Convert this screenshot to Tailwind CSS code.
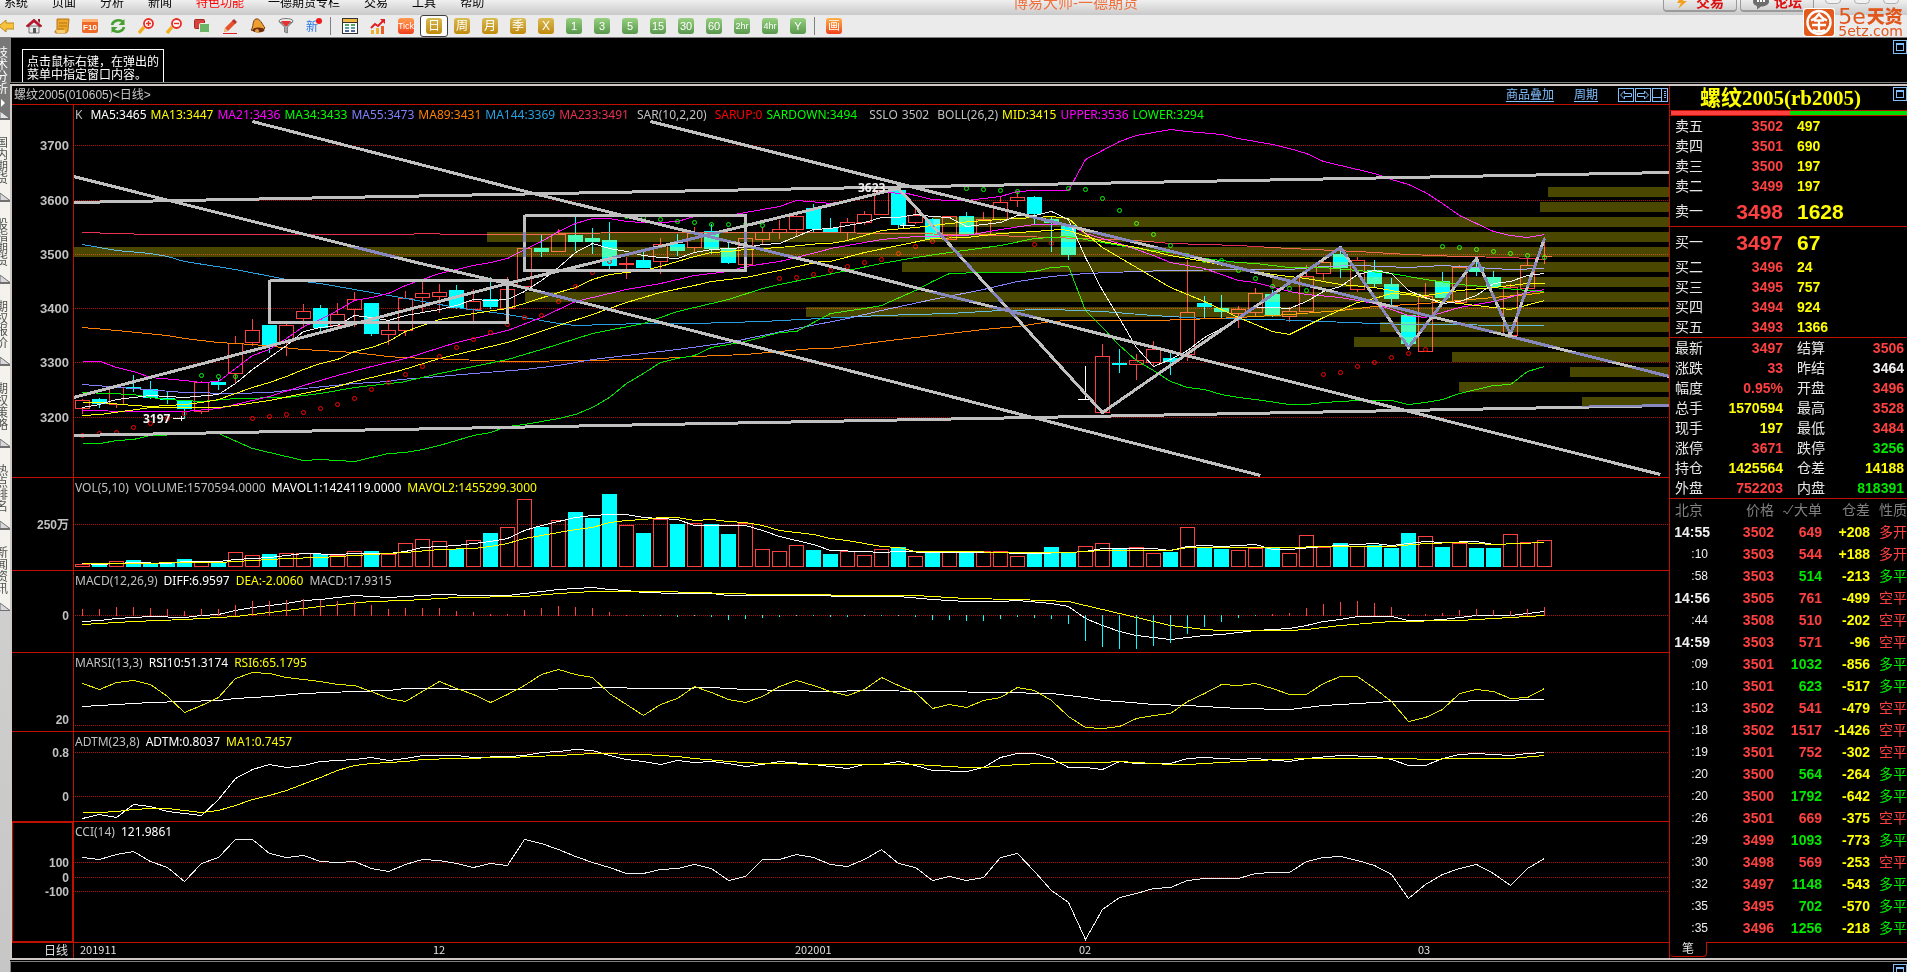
<!DOCTYPE html>
<html lang="zh-CN">
<head>
<meta charset="utf-8">
<title>博易大师-一德期货</title>
<script src="https://cdn.jsdelivr.net/npm/@tailwindcss/browser@4"></script>
</head>
<body class="h-screen overflow-hidden bg-black font-['Liberation_Sans','Noto_Sans_CJK_SC',sans-serif] text-xs">
<div class="flex h-full flex-col">

  <!-- Menu bar -->
  <header class="relative flex h-[15px] shrink-0 justify-between overflow-hidden bg-linear-to-b from-[#f0f0f0] to-[#c9c9c9]">
    <nav class="-mt-[5px] flex gap-6 pl-1 leading-4 whitespace-nowrap text-black">
      <a href="#">系统</a><a href="#">页面</a><a href="#">分析</a><a href="#">新闻</a><a href="#" class="text-[#ff0000]">特色功能</a><a href="#">一德期货专栏</a><a href="#">交易</a><a href="#">工具</a><a href="#">帮助</a>
    </nav>
    <h1 class="absolute inset-x-0 -top-[7px] pl-[244px] text-center text-[15px] leading-5 text-[#f0703c]">博易大师-一德期货</h1>
    <div class="relative flex h-3 gap-[3px] text-sm leading-none font-bold text-[#dd1010]">
      <button class="-mt-2 flex h-5 w-[74px] items-center justify-center gap-2 rounded-sm border border-b-2 border-[#9a9a9a] bg-linear-to-b from-white to-[#d2d2d2]">
        <svg class="h-4 w-3" viewBox="0 0 12 16"><path d="M6 1h5L7 7h4L2 15l3-6H1z" fill="#f5a01e"/></svg>交易
      </button>
      <button class="-mt-2 mr-2 flex h-5 w-[74px] items-center justify-center gap-1 rounded-sm border border-b-2 border-[#9a9a9a] bg-linear-to-b from-white to-[#d2d2d2]">
        <svg class="h-4 w-[18px]" viewBox="0 0 18 16"><path d="M9 2c5 0 8 2 8 5.500s-4 5-8 5l-4 3v-3.500C2 11 1 9.500 1 7.500 1 4 4 2 9 2z" fill="#6d6d6d"/><path d="M5 7h2M8 7h2M11 7h2" stroke="#fff" stroke-width="2"/></svg>论坛
      </button>
      <div class="-mt-3 mr-2 flex gap-[13px]">
        <button aria-label="最小化" class="size-4 rounded-sm border border-[#b0b0b0] bg-[#f2f2f2]"></button>
        <button aria-label="最大化" class="size-4 rounded-sm border border-[#b0b0b0] bg-[#f2f2f2]"></button>
        <button aria-label="关闭" class="size-4 rounded-sm border border-[#b0b0b0] bg-[#f2f2f2]"></button>
      </div>
    </div>
  </header>

  <!-- Toolbar -->
  <div class="relative flex h-[23px] shrink-0 items-center border-b border-[#808080] bg-[#ebebeb]">
    <div id="tools" class="-ml-2 flex h-full items-center"></div>
    <a href="#" class="absolute -top-[7px] right-1 flex items-start gap-[3px] font-['DejaVu_Sans','Noto_Sans_CJK_SC',sans-serif] text-[#e2561c]" aria-label="5e天资">
      <svg class="h-[29px] w-8" viewBox="0 0 32 29"><rect width="32" height="29" rx="3" fill="#fff"/><rect x="1" y="1" width="30" height="27" rx="3" fill="#e25a1c"/><g fill="none" stroke="#fff" stroke-width="2"><circle cx="16" cy="14.500" r="11.500" stroke-width="2.400"/><path d="M8 12.500C12 11 14 9 16 6c2 3 4 5 8 6.500M11 12.500h10M9 17h14M16 12v12M10 22c4 2 8 2 12 0" stroke-width="2.300"/></g></svg>
      <span class="flex flex-col">
        <span class="flex h-[17px] items-center gap-px leading-none"><span class="text-[22px]">5e</span><span class="text-[18px] font-black">天资</span></span>
        <span class="text-sm leading-3">5etz.com</span>
      </span>
    </a>
  </div>

  <div class="flex min-h-0 flex-1">
    <!-- Page tabs -->
    <aside id="tabs" class="flex w-[10px] shrink-0 flex-col overflow-hidden bg-linear-to-b from-[#dedede] to-[#c6c6c6]"></aside>

    <main class="flex min-w-0 flex-1 flex-col">
      <section class="relative flex h-[45px] shrink-0 items-end border-b border-l border-[#808080]">
        <p class="ml-[11px] h-[33px] border border-b-0 border-white pt-[6px] pr-1 pl-1 leading-[13px] text-white">点击鼠标右键，在弹出的<br>菜单中指定窗口内容。</p>
        <button aria-label="还原窗口" class="absolute top-[2px] right-0 h-[14px] w-[14px] border border-[#80c0ff] p-[2px]"><span class="block h-full border border-t-2 border-[#80c0ff]"></span></button>
      </section>

      <div class="mt-px flex min-h-0 flex-1 border-y-2 border-l-2 border-[#cfc8c4]">
        <!-- Chart column -->
        <section class="flex min-w-0 flex-1 flex-col">
          <div class="flex h-[19px] shrink-0 items-center border-b border-[#c01000] text-[#c8c8c8]">
            <h2 class="pl-[2px]">螺纹2005(010605)&lt;日线&gt;</h2>
            <div class="ml-auto flex items-center gap-5 pr-px text-[#80c0ff]">
              <a href="#" class="underline underline-offset-2">商品叠加</a>
              <a href="#" class="underline underline-offset-2">周期</a>
              <div class="flex gap-px">
                <button aria-label="前一个" class="h-[14px] w-4 border border-[#80c0ff]"><svg viewBox="0 0 14 12" class="h-3 w-[14px]"><path d="M1.500 6 5.500 2v2.500h7v3h-7V10z" fill="none" stroke="#80c0ff"/></svg></button>
                <button aria-label="后一个" class="h-[14px] w-4 border border-[#80c0ff]"><svg viewBox="0 0 14 12" class="h-3 w-[14px]"><path d="M12.500 6 8.500 2v2.500h-7v3h7V10z" fill="none" stroke="#80c0ff"/></svg></button>
                <button aria-label="布局" class="h-[14px] w-4 border border-[#80c0ff]"><svg viewBox="0 0 14 12" class="h-3 w-[14px]"><path d="M0 8.500h8.500M8.500 0v12M11 2.500h2M11 4.500h2M11 6.500h2M11 8.500h2" fill="none" stroke="#80c0ff"/></svg></button>
              </div>
            </div>
          </div>
          <div id="panes" class="grid min-h-0 flex-1 grid-rows-[373fr_93fr_82fr_79fr_90fr_121fr] font-['Noto_Sans','Noto_Sans_CJK_SC',sans-serif]"></div>
          <div class="flex h-[15px] shrink-0 font-['Noto_Sans_CJK_SC',sans-serif] leading-[14px] text-[#e0e0e0]">
            <div class="w-[62px] shrink-0 border-r border-[#c01000] pr-[5px] text-right">日线</div>
            <svg id="time-axis" class="h-full min-w-0 flex-1" viewBox="74 943 1595 15" preserveAspectRatio="xMinYMin meet"></svg>
          </div>
        </section>

        <!-- Quote column -->
        <section class="relative flex w-[238px] shrink-0 flex-col border-l border-[#c01000] text-sm leading-none">
          <h2 class="h-6 pr-4 text-center font-['Liberation_Serif','Noto_Sans_CJK_SC',serif] text-[21px] leading-6 font-bold text-[#ffff00]">螺纹2005(rb2005)</h2>
          <button aria-label="还原窗口" class="absolute top-px right-0 h-[14px] w-[14px] border border-[#80c0ff] p-[2px]"><span class="block h-full border border-t-2 border-[#80c0ff]"></span></button>
          <div class="flex h-[6px] shrink-0 border-y border-[#c01000]"><div class="ml-px w-1/2 bg-[#ff4040]"></div><div class="flex-1 bg-[#00e000]"></div></div>
          <table class="w-full table-fixed border-separate border-spacing-0">
            <colgroup><col class="w-[43px]"><col class="w-[70px]"><col></colgroup>
            <tbody id="asks"></tbody>
          </table>
          <table class="w-full table-fixed border-separate border-spacing-0 border-t border-[#c01000]">
            <colgroup><col class="w-[43px]"><col class="w-[70px]"><col></colgroup>
            <tbody id="bids"></tbody>
          </table>
          <table class="w-full table-fixed border-separate border-spacing-0 border-t border-[#c01000]">
            <colgroup><col class="w-[43px]"><col class="w-[70px]"><col class="w-[58px]"><col></colgroup>
            <tbody id="stats"></tbody>
          </table>
          <table class="w-full table-fixed border-separate border-spacing-0 border-t border-[#c01000]">
            <colgroup><col class="w-10"><col class="w-16"><col class="w-12"><col class="w-12"><col></colgroup>
            <thead><tr class="h-[22px] text-[#808080]"><th class="p-0 pl-[5px] text-left font-normal">北京</th><th class="p-0 text-right font-normal">价格</th><th class="p-0 text-right font-normal whitespace-nowrap"><span class="inline-flex items-center"><svg class="h-3 w-3" viewBox="0 0 12 12"><path d="M1 8l2-1 2 3 6-9" fill="none" stroke="#808080"/></svg>大单</span></th><th class="p-0 text-right font-normal">仓差</th><th class="p-0 pl-[9px] text-left font-normal whitespace-nowrap">性质</th></tr></thead>
            <tbody id="ticks"></tbody>
          </table>
          <div class="mt-auto flex h-4"><button class="h-[15px] w-[37px] rounded-b-sm border-r border-b border-[#c01000] text-xs leading-none text-[#e0e0e0]">笔</button><div class="flex-1 border-t border-[#c01000]"></div></div>
        </section>
      </div>
      <footer class="relative mt-px h-[11px] shrink-0 border-t border-l border-[#808080]">
        <button aria-label="还原窗口" class="absolute top-[2px] right-0 h-2 w-[14px] border border-b-0 border-[#80c0ff] p-[2px] pb-0"><span class="block h-full border border-t-2 border-b-0 border-[#80c0ff]"></span></button>
      </footer>
    </main>
  </div>
</div>

<script>
const $ = id => document.getElementById(id);

/* ---------- toolbar ---------- */
const icons = {
  back: '<path d="M1 8l7-6v3h8v6H8v3z" fill="#f7c23c" stroke="#b98a1c"/>',
  home: '<path d="M3 8h10v7H3z" fill="#e8e8ea" stroke="#777"/><path d="M0 8 8 1l8 7-2 1-6-5-6 5z" fill="#c8102a" stroke="#8c0c1c" stroke-width=".6"/><path d="M12 1h2v4l-2-2z" fill="#8c2020"/><path d="M7 10h3v5H7z" fill="#555"/>',
  scroll: '<path d="M3 1h12l-1 11c0 2-1 3-3 3H2c-1 0-1-1-1-2l2-1z" fill="#eda726" stroke="#b8741a"/><path d="M5 5h8M5 8h8M4 11h6" stroke="#b8741a"/><path d="M2 12h9v3H3z" fill="#f8cf70"/>',
  f10: '<rect y="1" width="16" height="14" rx="2" fill="#ee6a28"/><path d="M0 3q0-2 2-2h12q2 0 2 2v1H0z" fill="#ffb070"/><text x="8" y="12" text-anchor="middle" font-size="8" font-weight="bold" fill="#fff">F10</text>',
  refresh: '<path d="M2 7c1-5 8-6 11-3M14 9c-1 5-8 6-11 3" fill="none" stroke="#45a02c" stroke-width="2.600"/><path d="M14.500 1v6h-6zM1.500 15V9h6z" fill="#45a02c"/>',
  zin: '<path d="M6 9l-5 6" stroke="#f2b01e" stroke-width="3.400"/><circle cx="10.500" cy="5.500" r="4.500" fill="#fff" stroke="#e82c20" stroke-width="1.800"/><path d="M8 5.500h5M10.500 3v5" stroke="#e82c20" stroke-width="1.500"/>',
  zout: '<path d="M6 9l-5 6" stroke="#f2b01e" stroke-width="3.400"/><circle cx="10.500" cy="5.500" r="4.500" fill="#fff" stroke="#e82c20" stroke-width="1.800"/><path d="M8 5.500h5" stroke="#e82c20" stroke-width="1.500"/>',
  overlap: '<rect x=".5" y="1.500" width="10" height="9" rx="1" fill="#d8423c" stroke="#a82824"/><rect x="5.500" y="5.500" width="10" height="9" rx="1" fill="#6cb468" stroke="#e8f4e4"/>',
  pen: '<path d="M3 10 11 2l3 3-8 8-4 1z" fill="#e8502c"/><path d="M10 3l2-2 3 3-2 2z" fill="#b0342c"/><path d="M3 10l3 3-4 1z" fill="#f0c888"/><path d="M1 15.500h14" stroke="#dd2020"/>',
  bell: '<path d="M6 1c4-1 6 5 9 9-4 4-9 4-14 2 3-3 1-10 5-11z" fill="#eda030" stroke="#7a3a10"/><ellipse cx="8.500" cy="12" rx="6" ry="2.500" fill="#6c2c10"/><circle cx="7" cy="13" r="2" fill="#e0a040"/>',
  funnel: '<ellipse cx="8" cy="3" rx="7" ry="2.500" fill="#e8e8e8" stroke="#777"/><path d="M1.500 4C4 6 12 6 14.500 4L9.500 9v6l-3-1V9z" fill="#a8a8a8" stroke="#666" stroke-width=".7"/><path d="M3 3h10L9 8H7z" fill="#e83030"/>',
  news: '<text x="6" y="13" text-anchor="middle" font-size="12" fill="#2c7ae0">新</text><circle cx="13" cy="3" r="3" fill="#f01818"/>',
  grid: '<rect x=".5" y=".5" width="15" height="15" fill="#fff" stroke="#333"/><path d="M1 1h14v3H1z" fill="#f0b840"/><path d="M1 4.500h14" stroke="#333"/><path d="M3 7h4M9 7h4" stroke="#1c8c30" stroke-width="1.500"/><path d="M3 10h4M9 10h4" stroke="#208090" stroke-width="1.500"/><path d="M3 13h4M9 13h4" stroke="#203080" stroke-width="1.500"/>',
  trend: '<path d="M1 12h3v4H1zM6 10h3v6H6z" fill="#ecb42c"/><path d="M11 8h3v8h-3z" fill="#e85c28"/><path d="M1 10l4-4 3 2 6-6" fill="none" stroke="#e02020" stroke-width="2"/><path d="M10 1h5v5z" fill="#e02020"/>'
};
const skins = {
  gold: 'flex size-4 items-center justify-center rounded-[3px] bg-linear-to-b from-[#d8bc50] to-[#c08a00] text-xs leading-none text-white',
  green: 'flex size-4 items-center justify-center rounded-[3px] bg-linear-to-b from-[#98d080] to-[#58984c] text-[11px] leading-none text-white',
  small: 'flex size-4 items-center justify-center rounded-[3px] bg-linear-to-b from-[#98d080] to-[#58984c] text-[9px] leading-none text-white',
  red: 'flex size-4 items-center justify-center rounded-[3px] bg-linear-to-b from-[#ff9c50] to-[#f03c1c] text-[9px] leading-none text-white',
  paint: 'flex size-4 items-center justify-center rounded-[3px] bg-linear-to-b from-[#ffb048] to-[#f03c1c] text-xs leading-none text-white'
};
const tools = ['back','home','scroll','f10','refresh','zin','zout','overlap','pen','bell','funnel','news','|','grid','trend',
  ['red','Tick'],['gold','日'],['gold','周'],['gold','月'],['gold','季'],['gold','X'],
  ['green','1'],['green','3'],['green','5'],['green','15'],['green','30'],['green','60'],['small','2hr'],['small','4hr'],['green','Y'],'|',['paint','画']];
$('tools').innerHTML = tools.map(t => {
  if (t === '|') return '<span class="mr-[5px] ml-[2px] h-[18px] w-px bg-[#808080]"></span>';
  if (typeof t === 'string') return `<button aria-label="${t}" class="flex h-[22px] w-7 items-center justify-center"><svg class="size-4" viewBox="0 0 16 16">${icons[t]}</svg></button>`;
  const frame = t[1] === '日'
    ? 'flex h-[22px] w-7 items-center justify-center rounded-[3px] border border-[#404040] bg-white'
    : 'flex h-[22px] w-7 items-center justify-center';
  return `<button class="${frame}"><span class="${skins[t[0]]}">${t[1]}</span></button>`;
}).join('');

/* ---------- page tabs ---------- */
$('tabs').innerHTML = ['技术分析','国内期货','股指期货','期权报价','期权策略','热点排名','新闻资讯'].map((name, i) => {
  const text = [...name].map(c => `<span class="-ml-1 block w-3">${c}</span>`).join('');
  return i === 0
    ? `<button class="relative h-[81px] shrink-0 bg-[#787878] text-left leading-3 text-white">${text}<svg class="h-4 w-[10px]" viewBox="0 0 10 16"><path d="M1 4v8l4-4z" fill="#fff"/></svg><svg class="absolute bottom-0 left-0 h-2 w-[10px]" viewBox="0 0 10 8"><path d="M0 0 10 7.500H0z" fill="#e4e4e8" stroke="#707070"/></svg></button>`
    : `<button class="relative h-[82px] shrink-0 border-t border-[#707070] bg-[#f3f2ec] text-left leading-3 text-[#505050]">${text}<svg class="absolute bottom-0 left-0 h-2 w-[10px]" viewBox="0 0 10 8"><path d="M0 0 10 7.500H0z" fill="#d8d8dc" stroke="#707070"/></svg></button>`;
}).join('');

/* ---------- quote tables ---------- */
const hue = { r: 'text-[#ff4040]', y: 'text-[#ffff00]', g: 'text-[#00e800]', w: 'text-[#f0f0f0]' };
const level = ([name, price, qty], big) => `<tr class="${big ? 'h-[30px]' : 'h-5'}"><th class="p-0 pl-[5px] text-left font-normal text-[#e8e8e8]">${name}</th><td class="p-0 text-right font-bold text-[#ff4040] ${big ? 'text-[21px]' : ''}">${price}</td><td class="p-0 pl-[14px] font-bold text-[#ffff00] ${big ? 'text-[21px]' : ''}">${qty}</td></tr>`;
$('asks').innerHTML = [['卖五',3502,497],['卖四',3501,690],['卖三',3500,197],['卖二',3499,197],['卖一',3498,1628]].map((r, i) => level(r, i === 4)).join('');
$('bids').innerHTML = [['买一',3497,67],['买二',3496,24],['买三',3495,757],['买四',3494,924],['买五',3493,1366]].map((r, i) => level(r, i === 0)).join('');
$('stats').innerHTML = [['最新','3497','r','结算','3506','r'],['涨跌','33','r','昨结','3464','w'],['幅度','0.95%','r','开盘','3496','r'],['总手','1570594','y','最高','3528','r'],['现手','197','y','最低','3484','r'],['涨停','3671','r','跌停','3256','g'],['持仓','1425564','y','仓差','14188','y'],['外盘','752203','r','内盘','818391','g']]
  .map(([a, b, c, d, e, f]) => `<tr class="h-5"><th class="p-0 pl-[5px] text-left font-normal text-[#e8e8e8]">${a}</th><td class="p-0 text-right font-bold ${hue[c]}">${b}</td><th class="p-0 pl-[14px] text-left font-normal text-[#e8e8e8]">${d}</th><td class="p-0 pr-[3px] text-right font-bold ${hue[f]}">${e}</td></tr>`).join('');
$('ticks').innerHTML = `14:55 3502 649 +208 多开 r r
:10 3503 544 +188 多开 r r
:58 3503 514 -213 多平 g g
14:56 3505 761 -499 空平 r r
:44 3508 510 -202 空平 r r
14:59 3503 571 -96 空平 r r
:09 3501 1032 -856 多平 g g
:10 3501 623 -517 多平 g g
:13 3502 541 -479 空平 r r
:18 3502 1517 -1426 空平 r r
:19 3501 752 -302 空平 r r
:20 3500 564 -264 多平 g g
:20 3500 1792 -642 多平 g g
:26 3501 669 -375 空平 r r
:29 3499 1093 -773 多平 g g
:30 3498 569 -253 空平 r r
:32 3497 1148 -543 多平 g g
:35 3495 702 -570 多平 g g
:35 3496 1256 -218 多平 g g`.split('\n').map(l => {
  const [t, p, v, d, k, c1, c2] = l.split(' ');
  return `<tr class="h-[22px]"><td class="p-0 text-right text-[#f0f0f0] ${t.length > 3 ? 'font-bold' : 'pr-[2px] text-xs'}">${t}</td><td class="p-0 text-right font-bold text-[#ff4040]">${p}</td><td class="p-0 text-right font-bold ${hue[c1]}">${v}</td><td class="p-0 text-right font-bold text-[#ffff00]">${d}</td><td class="p-0 pl-[9px] whitespace-nowrap ${hue[c2]}">${k}</td></tr>`;
}).join('');

/* ---------- chart helpers ---------- */
const X = i => 82 + 17 * i;
const poly = (pts, color, w = 1) => `<polyline points="${pts.map(([x, y]) => `${x + .5},${y + .5}`).join(' ')}" fill="none" stroke="${color}" stroke-width="${w}"/>`;
const parse = s => s.trim().split(/\s+/).map(p => p.split(',').map(Number));
const curve = (s, color) => poly(parse(s), color);
/* "bar:level" pairs, levels in thirds of a pixel below y=470 */
const series = (s, color) => poly(s.trim().split(/[\s,]+/).map(p => { const [i, v] = p.split(':').map(Number); return [X(i), Math.round(470 + v / 3 - .4)]; }), color);
const grid = ys => ys.map(y => `<path d="M75 ${y + .5}H1669" stroke="#b01010" stroke-dasharray="1 1"/>`).join('');
const box = (x, y, h, red) => red
  ? `<rect x="${x - 6.5}" y="${y + .5}" width="14" height="${Math.max(h - 1, 1)}" fill="none" stroke="#ff4040"/>`
  : `<rect x="${x - 7}" y="${y}" width="15" height="${h}" fill="#00ffff"/>`;

/* kind high body-top body-bottom low, one entry per trading day */
const candles = `r 399 400 409 414|c 398 399 404 408|r 387 387 405 408|c 375 387 389 392|c 381 389 398 399|c 391 398 400 404|c 400 400 409 419|r 381 382 412 414|c 378 382 385 390|r 336 343 374 383
r 319 330 343 346|c 325 325 345 353|r 324 325 342 356|r 304 311 319 328|c 305 308 328 332|r 303 314 326 329|r 292 299 310 327|c 303 303 334 336|r 324 330 335 345|r 291 298 331 336
r 280 293 298 313|r 284 292 297 313|c 285 290 308 309|r 289 301 310 321|c 277 299 307 309|r 277 289 309 309|r 248 248 287 287|c 235 248 252 257|r 229 234 252 252|c 216 235 242 251
c 228 238 242 254|c 222 240 266 270|r 257 263 265 279|c 252 260 268 268|r 238 244 262 274|c 234 244 251 256|r 227 233 248 252|c 224 231 249 254|c 243 248 263 264|r 238 238 265 265
r 227 232 240 244|r 220 229 233 239|r 212 216 230 236|c 204 208 229 232|c 218 228 232 232|r 218 222 233 241|r 211 214 223 225|r 190 190 215 215|c 190 190 225 228|r 209 215 223 224
c 218 219 239 239|r 216 216 240 240|c 212 216 234 234|r 212 219 235 235|r 196 202 220 221|r 191 197 201 207|c 196 197 214 224|c 217 219 223 252|c 225 225 255 260|w 366 399 400 400
r 344 356 413 413|c 349 363 365 373|r 354 360 365 380|r 341 349 363 367|c 352 358 362 375|r 260 312 355 361|c 296 303 307 318|c 295 308 312 318|r 306 309 314 328|r 288 293 313 317
c 290 294 315 317|r 307 311 317 322|r 265 276 312 312|r 259 262 274 280|c 246 254 268 278|r 257 260 290 292|c 260 270 284 287|c 278 284 299 305|c 315 315 344 350|r 283 296 352 352
c 272 281 298 298|r 265 267 303 303|c 257 267 272 276|c 271 277 287 288|r 284 287 336 336|r 259 265 289 289|r 237 256 256 264`.split(/[|\n]/).map(s => { const [k, ...v] = s.split(' '); return [k, ...v.map(Number)]; });

/* price-distribution bands: left edge, top */
const bands = parse('1548,187 1540,202 933,217 487,232 74,247 902,262 1272,277 525,292 806,307 1380,322 1354,337 1452,352 1570,367 1459,382 1582,397');

let reds = '', cyans = '';
candles.forEach(([k, hi, t, b, lo], i) => {
  const x = X(i);
  if (k === 'w') { reds += `<path d="M${x + .5} ${hi}V400M${x - 7} 399.500h11" stroke="#fff"/>`; return; }
  if (k === 'r') {
    if (t === b) { reds += `<path d="M${x + .5} ${hi}V${lo}M${x - 1} 256.500h9" stroke="#ff4040"/>`; return; }
    reds += `<path d="M${x + .5} ${hi}V${t}M${x + .5} ${b}V${lo}" stroke="#ff4040"/>` + box(x, t, b - t, true);
    return;
  }
  cyans += `<path d="M${x + .5} ${hi}V${lo}" stroke="#00ffff"/>` + box(x, t, b - t, false);
  bands.forEach(([bx, by]) => {
    const y0 = Math.max(t, by), y1 = Math.min(b, by + 10);
    if (bx <= x && y1 > y0) cyans += `<rect x="${x - 7}" y="${y0}" width="15" height="${y1 - y0}" fill="#00ffb7"/>`;
  });
});

const sar = 'r435 r433 r432 r427 r423 r418 r413 g375 g376 g376 r418 r416 r414 r412 r408 r404 r398 r389 r382 r374 r366 r356 r347 r339 r332 r324 r317 r315 r301 r286 r272 r261 g216 g217 g219 g221 g222 g224 g224 g224 g225 r278 r277 r274 r270 r266 r262 r259 r253 r246 r241 r237 g188 g189 g190 g191 r244 r243 g188 g189 g198 g210 g223 g234 g245 g255 g260 g260 g270 g278 g286 g288 g290 r374 r372 r366 r362 r357 r353 r349 g246 g247 g249 g251 g253 g255 g257'
  .split(' ').map((s, i) => `<circle cx="${X(i) + .5}" cy="${+s.slice(1) + .5}" r="2" fill="none" stroke="${s[0] === 'r' ? '#ff0000' : '#00ff00'}" shape-rendering="auto"/>`).join('');

const mas =
  curve('82,232 116,233 150,234 405,234 422,233 456,234 541,234 575,233 626,232 813,232 898,233 966,234 1051,237 1136,240 1170,243 1238,245 1289,248 1357,251 1408,254 1459,256 1510,257 1544,259', '#e83050') +
  curve('82,244 116,250 150,253 167,256 184,261 235,269 286,279 320,283 354,289 388,295 400,297 456,307 507,314 558,323 575,325 609,324 643,323 694,323 762,321 820,318 881,315 949,313 1000,310 1051,309 1102,311 1153,315 1204,318 1272,319 1323,321 1374,323 1408,324 1544,325', '#28a0e0') +
  curve('82,327 116,330 167,335 184,338 218,342 252,344 303,349 354,352 388,356 400,357 456,359 507,361 592,360 660,358 694,356 745,354 779,351 813,348 830,348 881,341 932,335 983,329 1017,326 1051,321 1068,320 1153,320 1187,319 1238,317 1289,314 1340,310 1374,306 1425,303 1459,300 1493,297 1527,294 1544,292', '#ff8000') +
  curve('82,384 133,388 184,392 235,393 269,392 303,388 354,383 388,381 400,379 439,376 473,373 524,369 558,365 592,359 643,353 677,349 728,342 762,335 796,328 847,318 881,310 932,299 983,289 1017,281 1051,276 1085,273 1136,271 1170,270 1238,269 1289,269 1323,266 1357,265 1408,267 1442,265 1476,267 1510,269 1544,268', '#8080ff') +
  curve('82,392 133,394 150,397 167,399 201,401 235,398 286,397 320,393 354,387 388,383 400,382 439,373 507,359 541,349 592,333 643,323 677,311 728,299 762,288 779,284 813,277 847,270 881,263 915,257 949,252 1000,245 1034,238 1068,236 1102,242 1136,248 1170,252 1204,258 1238,262 1255,263 1289,267 1323,267 1357,270 1391,273 1425,279 1459,284 1493,287 1527,290 1544,291', '#00e800') +
  curve('82,410 133,411 184,411 218,408 235,404 269,396 303,385 337,375 371,366 405,358 456,342 490,334 507,330 541,317 575,301 626,289 660,283 694,275 728,271 745,266 779,261 820,251 830,248 881,239 915,236 966,235 1000,229 1034,224 1068,224 1085,233 1119,243 1153,255 1170,262 1204,268 1238,280 1255,282 1289,291 1306,294 1340,297 1374,303 1408,315 1425,317 1459,307 1493,301 1527,292 1544,289', '#ff00ff') +
  curve('82,415 100,414 150,407 218,407 235,405 269,400 303,393 337,386 354,381 388,373 400,370 439,358 507,342 558,325 592,314 626,302 660,292 694,285 711,281 745,277 779,270 820,261 830,261 864,252 898,245 932,238 966,237 1000,233 1034,231 1060,229 1068,230 1102,241 1136,247 1170,255 1204,261 1238,268 1272,274 1306,278 1340,284 1374,287 1408,293 1425,295 1459,290 1493,287 1527,283 1544,283', '#ffff00') +
  curve('82,402 100,402 133,405 150,406 184,404 201,402 218,399 235,393 252,387 269,382 286,376 303,369 320,363 337,359 354,351 371,347 388,341 405,331 439,319 473,313 507,308 524,303 558,292 575,287 592,279 609,274 643,270 660,266 677,261 694,256 711,252 728,251 745,249 779,247 820,243 830,243 847,240 864,235 881,230 915,227 949,223 983,220 1017,218 1051,216 1068,218 1085,233 1102,247 1136,267 1170,287 1204,301 1238,317 1255,324 1272,331 1289,334 1323,317 1357,302 1374,298 1391,293 1408,294 1442,301 1476,305 1510,309 1544,300', '#ffff00') +
  curve('82,361 100,361 116,367 133,371 150,377 184,380 201,382 218,381 235,368 252,355 269,349 286,338 303,326 320,319 337,310 354,300 371,297 388,293 405,285 422,279 439,273 473,265 490,262 507,258 524,249 541,241 558,231 575,223 592,218 609,218 626,221 643,222 660,222 677,221 694,216 728,215 745,212 762,209 779,206 796,200 820,202 830,203 847,200 864,197 881,192 907,193 915,195 932,199 949,200 966,200 983,198 1000,196 1017,191 1034,190 1068,190 1085,159 1102,150 1119,141 1136,135 1153,132 1170,129 1187,131 1221,134 1238,138 1272,144 1289,148 1306,153 1323,161 1357,169 1374,173 1391,179 1408,184 1425,192 1442,203 1459,215 1476,223 1493,231 1510,235 1527,237 1544,234', '#ff00ff') +
  curve('82,443 100,443 116,440 133,439 150,435 184,434 201,432 218,433 252,448 269,452 286,456 303,460 320,459 354,461 371,457 388,453 405,452 422,449 439,445 473,435 490,432 507,426 524,424 541,421 558,418 575,414 592,407 609,397 626,383 643,373 660,362 677,358 694,355 711,347 728,344 745,341 779,332 796,331 813,322 830,313 864,308 881,305 915,290 932,281 949,273 983,272 1017,272 1034,271 1051,267 1068,266 1085,310 1102,327 1119,345 1136,360 1153,370 1170,381 1187,387 1204,389 1221,394 1238,397 1255,399 1289,404 1306,404 1323,402 1357,400 1391,400 1408,404 1425,402 1442,399 1459,393 1493,385 1510,384 1527,371 1544,366', '#00e800') +
  curve('82,407 99,404 116,399 150,395 184,397 218,394 235,383 252,369 269,357 286,345 303,331 320,327 337,325 354,315 371,317 388,320 405,315 439,309 456,305 473,299 490,300 507,299 524,291 541,280 558,267 575,252 592,243 609,248 626,251 643,255 660,257 677,258 694,252 711,249 728,248 745,247 762,244 779,243 796,236 813,229 830,228 847,225 864,222 881,217 898,217 915,214 932,216 949,217 966,226 983,224 1000,222 1017,215 1034,215 1051,211 1068,219 1085,257 1102,290 1119,318 1136,347 1153,366 1170,359 1187,350 1204,337 1221,328 1238,318 1255,307 1272,307 1289,308 1306,301 1323,291 1340,286 1357,274 1374,270 1391,273 1408,290 1425,297 1442,303 1459,301 1476,295 1493,283 1510,281 1527,275 1544,273', '#f0f0f0');

const drawn = color => [
  '73,202 1669,172', '73,435 1669,405', '73,176 420,263 507,283 1260,475', '252,121 533,193 847,270 1660,474', '650,121 910,186 1240,268 1669,376',
  '73,397 507,283 898,188 1102,412 1340,247 1408,347 1476,258 1510,334 1544,238',
  '269,280 507,280 507,322 269,322 269,279', '524,215 745,215 745,270 524,270 524,214'
].map(s => poly(parse(s), color, 3)).join('');

const volTop = [564,564,561,560,563,563,559,562,562,552,555,554,553,553,554,555,551,551,554,543,539,541,549,540,533,527,499,527,520,512,518,494,525,533,519,524,523,524,534,523,549,551,545,550,554,551,555,549,547,556,552,552,552,551,551,556,553,547,553,546,543,549,547,553,552,527,548,549,550,548,548,553,535,547,543,546,545,548,533,536,547,543,548,548,534,542,540];
const volBars = volTop.map((y, i) => box(X(i), y, 567 - y, candles[i][0] !== 'c')).join('');

const hist = [417,417,411,411,414,417,423,417,417,405,393,393,390,387,390,393,393,405,417,414,414,414,423,427,432,432,420,414,408,411,414,426,434,438,438,441,438,441,450,446,444,441,438,438,441,440,438,438,438,441,450,450,453,453,447,441,444,447,462,513,531,537,537,528,519,492,471,456,444,438,432,429,414,402,396,393,399,411,432,432,429,420,417,420,423,417,411]
  .map((v, i) => `<path d="M${X(i) + .5} ${v < 436 ? 616 : 615}V${Math.round(470 + v / 3)}" stroke="${v < 436 ? '#ff4040' : '#00ffff'}"/>`).join('');

const G = 'text-[#c0c0c0]', W = 'text-white', Y = 'text-[#ffff00]', M = 'text-[#ff00ff]', N = 'text-[#00ff00]';
const panes = [
  { top: 105, h: 372, size: 13, gap: 'gap-1',
    labels: [['3700',145],['3600',200],['3500',254],['3400',308],['3300',362],['3200',417]],
    legend: [['K','mr-1 text-[#c0c0c0]'],['MA5:3465',W],['MA13:3447',Y],['MA21:3436',M],['MA34:3433',N],['MA55:3473','text-[#8080ff]'],['MA89:3431','text-[#ff8000]'],['MA144:3369','text-[#28a0e0]'],['MA233:3491','text-[#e83050]'],['SAR(10,2,20)','mx-1 text-[#c0c0c0]'],['SARUP:0','text-[#ff0000]'],['SARDOWN:3494',N],['SSLO','ml-2 text-[#c0c0c0]'],['3502',G],['BOLL(26,2)','ml-1 text-[#c0c0c0]'],['MID:3415',Y],['UPPER:3536',M],['LOWER:3294',N]],
    body: `<defs><clipPath id="in-bands">${bands.map(([x, y]) => `<rect x="${x}" y="${y}" width="${1669 - x}" height="10"/>`).join('')}</clipPath></defs>`
      + grid([145,200,254,308,362,417]) + reds + cyans + mas + sar
      + `<g style="mix-blend-mode:screen" fill="#4a4800">${bands.map(([x, y]) => `<rect x="${x}" y="${y}" width="${1669 - x}" height="10"/>`).join('')}</g>`
      + drawn('#c0c0c0') + `<g clip-path="url(#in-bands)">${drawn('#8888c0')}</g>`
      + `<g fill="#f0f0f0" font-size="12" font-weight="bold"><text x="143" y="423">3197</text><text x="858" y="192">3623</text></g><path d="M173 418.500h11M181 416v5M900 225.500h15M903 223v5" stroke="#fff"/>` },
  { top: 478, h: 92, size: 12, gap: 'gap-[6px]', labels: [['250万',524]],
    legend: [['VOL(5,10)',G],['VOLUME:1570594.0000',G],['MAVOL1:1424119.0000',W],['MAVOL2:1455299.3000',Y]],
    body: grid([524]) + volBars
      + series('0:281 1:284 3:277 5:279 6:274 8:274 9:268 11:262 13:250 15:254 16:250 18:251 19:244 20:232 22:226 23:220 24:214 25:206 26:180 27:166 28:153 29:143 30:136 31:133 32:133 33:141 34:145 35:148 36:166 39:166 40:181 41:199 42:212 43:223 44:241 46:243 47:246 48:244 50:247 53:246 56:250 58:248 59:244 60:235 62:235 63:236 64:240 65:230 66:226 67:230 69:223 70:238 71:238 73:230 76:220 77:226 79:214 80:217 82:214 83:223 86:217', '#ffffff')
      + series('0:280 3:279 6:278 8:276 10:272 12:266 14:262 16:257 19:246 21:239 23:235 24:230 25:220 26:205 28:187 29:178 30:172 31:157 32:151 33:148 34:143 35:143 36:151 37:148 38:154 39:157 40:166 41:181 43:192 44:205 45:211 47:229 48:232 49:244 52:245 54:248 58:247 60:241 64:241 65:232 71:232 73:229 77:229 79:220 81:217 83:223 86:217', '#ffff00') },
  { top: 571, h: 81, size: 12, gap: 'gap-[6px]', labels: [['0',615]],
    legend: [['MACD(12,26,9)',G],['DIFF:6.9597',W],['DEA:-2.0060',Y],['MACD:17.9315',G]],
    body: grid([615])
      + series('0:455 1:452 2:446 4:440 6:442 7:437 8:433 9:421 10:413 12:400 13:391 14:389 16:376 18:382 20:377 21:374 23:377 25:376 26:371 28:358 30:352 31:358 32:361 33:367 35:370 37:371 38:376 42:376 46:379 48:380 50:388 52:394 54:394 55:391 57:400 58:409 59:444 60:466 61:484 62:496 63:502 64:508 65:502 66:496 67:493 69:482 71:475 72:466 73:454 74:449 75:439 77:439 78:451 79:452 80:448 82:437 84:436 85:431 86:424', '#ffffff')
      + series('0:463 3:454 6:448 9:439 11:427 14:409 17:395 19:391 22:383 26:379 28:370 30:365 34:365 36:368 40:374 43:374 45:376 49:376 52:384 55:389 58:394 60:418 62:442 63:454 64:466 66:478 67:481 71:481 72:478 74:466 77:455 81:451 83:446 86:436', '#ffff00') + hist },
  { top: 653, h: 78, size: 12, gap: 'gap-[6px]', labels: [['20',719]],
    legend: [['MARSI(13,3)',G],['RSI10:51.3174',W],['RSI6:65.1795',Y]],
    body: grid([725])
      + series('0:709 4:698 8:691 9:685 11:680 13:670 16:664 18:661 19:655 24:658 27:658 29:655 31:652 33:655 35:655 37:652 39:658 44:664 46:662 50:664 54:667 57:670 58:676 59:682 60:691 61:694 63:703 65:706 67:712 68:715 71:718 73:706 75:700 77:694 80:694 83:691 86:688', '#ffffff')
      + series('0:640 1:658 2:637 3:631 4:643 5:680 6:727 7:706 8:682 9:625 10:607 11:610 12:622 14:633 15:643 16:646 17:664 18:685 19:694 20:664 21:634 22:655 23:673 24:697 25:672 26:646 27:613 28:598 29:613 30:622 31:670 32:703 33:737 34:703 35:685 36:649 37:668 38:688 39:697 40:679 41:649 42:631 43:646 44:664 45:676 46:658 47:622 48:646 49:667 50:715 51:703 52:712 53:691 54:682 55:652 56:661 57:691 58:739 59:772 60:775 61:769 62:745 63:736 64:730 65:694 66:670 67:643 68:646 69:640 70:655 71:673 72:673 73:640 74:619 75:619 76:655 77:694 78:754 79:742 80:718 81:670 82:658 83:664 84:685 85:682 86:655', '#e8e800') },
  { top: 732, h: 89, size: 12, gap: 'gap-[6px]', labels: [['0.8',752],['0',796]],
    legend: [['ADTM(23,8)',G],['ADTM:0.8037',W],['MA1:0.7457',Y]],
    body: grid([752,796])
      + series('0:1045 1:1033 2:1042 3:1003 4:1010 5:1024 6:1030 7:1036 8:988 9:925 10:898 11:883 12:892 13:886 14:875 16:868 17:862 18:871 19:865 20:856 22:856 23:862 25:860 26:856 27:847 28:844 29:838 30:841 31:856 32:868 33:874 34:883 35:871 36:877 37:874 38:880 39:889 40:883 41:874 43:883 45:895 46:883 47:883 48:874 49:886 50:901 52:904 53:892 54:862 55:850 56:850 57:865 58:892 59:892 60:898 61:874 62:880 64:880 65:865 66:862 68:869 69:865 71:874 72:865 74:856 76:860 77:868 78:886 79:886 80:865 81:853 82:850 84:856 85:850 86:847', '#ffffff')
      + series('0:1027 1:1027 2:1024 3:1018 4:1015 5:1015 6:1021 7:1027 8:1021 9:1006 10:988 11:976 12:961 14:922 15:902 16:886 17:880 19:874 20:868 22:865 25:861 28:856 30:851 33:853 35:859 36:865 38:874 40:880 44:882 49:883 52:892 53:892 55:883 58:877 60:877 61:874 62:876 64:883 65:883 67:877 69:871 72:865 78:865 79:868 81:865 84:865 86:856', '#ffff00') },
  { top: 822, h: 120, size: 12, gap: 'gap-[6px]', labels: [['100',862],['0',877],['-100',891]], active: true,
    legend: [['CCI(14)',G],['121.9861',W]],
    body: grid([862,877,891])
      + series('0:1162 1:1168 2:1153 3:1144 4:1173 5:1192 6:1234 7:1180 8:1162 9:1108 10:1108 11:1150 12:1162 13:1156 14:1174 15:1177 16:1174 17:1195 18:1204 19:1183 20:1168 21:1171 22:1180 23:1192 24:1180 25:1186 26:1108 27:1120 28:1138 29:1159 30:1177 31:1192 32:1210 33:1210 34:1198 35:1195 36:1183 37:1195 38:1231 39:1219 40:1168 41:1168 42:1153 43:1162 44:1183 45:1189 46:1168 47:1138 48:1180 49:1192 50:1231 51:1219 52:1231 53:1222 54:1162 55:1150 56:1204 57:1261 58:1297 59:1408 60:1318 61:1282 62:1270 63:1255 64:1252 65:1231 66:1225 68:1225 69:1210 70:1207 71:1207 72:1174 73:1162 74:1159 75:1171 76:1186 77:1213 78:1285 79:1243 80:1213 81:1195 82:1183 83:1210 84:1246 85:1195 86:1165', '#f0f0f0') }
];
$('panes').innerHTML = panes.map(p => `<div class="flex min-h-0 border-b border-[#c01000]">
  <svg class="h-full w-[62px] shrink-0 border-r border-[#c01000] font-['Liberation_Sans','Noto_Sans_CJK_SC',sans-serif]" viewBox="12 ${p.top} 61 ${p.h}" preserveAspectRatio="xMaxYMin meet">
    ${p.active ? `<path d="M72.500 ${p.top}V942M12 ${p.top + .5}h61M12.500 ${p.top}V942M12 941.500h61" stroke="#c01000"/>` : ''}
    <g fill="#c0c0c0" font-weight="bold" font-size="${p.size}" text-anchor="end">${p.labels.map(([t, y]) => `<text x="69" y="${y + 5}">${t}</text>`).join('')}</g>
  </svg>
  <div class="relative min-w-0 flex-1 overflow-hidden">
    <svg class="block h-full w-full" viewBox="74 ${p.top} 1595 ${p.h}" preserveAspectRatio="xMinYMin meet" shape-rendering="crispEdges">${p.body}</svg>
    <div class="absolute top-0 left-px flex ${p.gap} leading-5 whitespace-nowrap">${p.legend.map(([t, c]) => `<span class="${c}">${t}</span>`).join('')}</div>
  </div>
</div>`).join('');

$('time-axis').innerHTML = `<g fill="#e0e0e0" font-size="11">${[['201911',80],['12',433],['202001',795],['02',1079],['03',1418]].map(([t, x]) => `<text x="${x}" y="954">${t}</text>`).join('')}</g>`;
</script>
</body>
</html>
